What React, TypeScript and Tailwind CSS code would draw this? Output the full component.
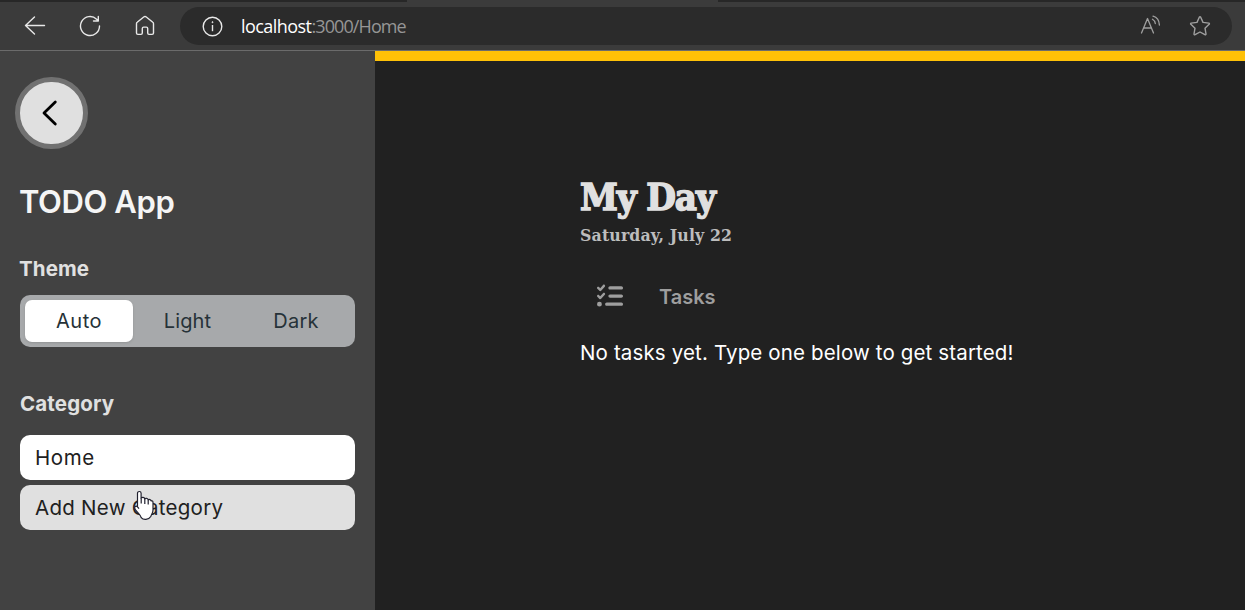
import React from "react";
import { FaListCheck } from "react-icons/fa6";

const sans = "font-['Inter','Open_Sans',sans-serif]";
const slab = "font-['DejaVu_Serif_Condensed','DejaVu_Serif',serif]";

function BrowserBar() {
  return (
    <header className="flex h-[51px] shrink-0 flex-col border-b border-[#6b6b6b] bg-[#3b3b3b]">
      <div className="flex h-[2px] shrink-0 justify-between">
        <div className="w-[407px] bg-[#272727]" />
        <div className="w-[527px] bg-[#272727]" />
      </div>
      <div className="flex flex-1 items-center pr-[13px] pl-6 text-[#e8e8e8]">
        <svg width="22" height="22" viewBox="0 0 22 22" fill="none" stroke="currentColor" strokeWidth="1.4" strokeLinecap="round" strokeLinejoin="round">
          <path d="M20.5 10.5H1.5M10.5 2L1.5 10.5L10.5 19" />
        </svg>
        <svg className="ml-[33px]" width="22" height="22" viewBox="0 0 22 22" fill="none" stroke="currentColor" strokeWidth="1.4" strokeLinecap="round" strokeLinejoin="round">
          <path d="M20.5 11A9.5 9.5 0 1 1 17.6 4.2L19.3 5.9M19.3 1.5V6H14.5" />
        </svg>
        <svg className="ml-[33px]" width="22" height="22" viewBox="0 0 22 22" fill="none" stroke="currentColor" strokeWidth="1.4" strokeLinejoin="round">
          <path d="M2.5 8.7C2.5 8.1 2.8 7.6 3.2 7.3L9.7 2C10.5 1.4 11.5 1.4 12.3 2L18.8 7.3C19.2 7.6 19.5 8.1 19.5 8.7V18C19.5 18.9 19 19.4 18.1 19.4H15C14.2 19.4 13.7 18.9 13.7 18V13.4C13.7 12.6 13.2 12.1 12.4 12.1H9.6C8.8 12.1 8.3 12.6 8.3 13.4V18C8.3 18.9 7.8 19.4 7 19.4H3.9C3 19.4 2.5 18.9 2.5 18Z" />
        </svg>
        <div className="ml-6 flex h-[38px] flex-1 items-center rounded-full bg-[#2b2b2b] pr-[21px] pl-[22px]">
          <svg width="21" height="21" viewBox="0 0 21 21" fill="none" stroke="currentColor" strokeWidth="1.4">
            <circle cx="10.5" cy="10.5" r="9.3" />
            <path d="M10.5 9V15.2" />
            <circle cx="10.5" cy="6.2" r="0.6" fill="currentColor" strokeWidth="0.7" />
          </svg>
          <div className="-mt-px ml-[18px] flex-1 font-['Open_Sans','Noto_Sans',sans-serif] text-[18px] leading-6 tracking-[-0.55px] text-white">
            localhost<span className="tracking-[-0.9px] text-[#969696]">:3000/Home</span>
          </div>
          <svg width="22" height="22" viewBox="0 0 22 22" fill="none" stroke="#a0a0a0" strokeWidth="1.3" strokeLinecap="round" strokeLinejoin="round">
            <path d="M2.5 18L8.5 3.5L14.5 18M4.7 13H12.3M13.5 4.3C15.2 5.3 16.1 6.5 16.3 8.5M14 1.2C17.8 2.2 20.2 5.5 20.4 10" />
          </svg>
          <svg className="ml-[28px]" width="22" height="22" viewBox="0 0 22 22" fill="none" stroke="#a0a0a0" strokeWidth="1.4" strokeLinejoin="round">
            <path d="M10.3 2.2Q11 1.2 11.7 2.2L14 7.4L19.8 8.1Q20.9 8.4 20.1 9.3L16 13.2L17 19Q17 20.2 15.9 19.7L11 17L6.1 19.7Q5 20.2 5 19L6 13.2L1.9 9.3Q1.1 8.4 2.2 8.1L8 7.4Z" />
          </svg>
        </div>
      </div>
    </header>
  );
}

function HandCursor() {
  return (
    <svg className="absolute top-[5px] left-[114px]" width="24" height="32" viewBox="0 0 24 32" fill="white" stroke="#20202e" strokeWidth="1.2" strokeLinejoin="round">
      <path d="M3.5 16.5V3.2C3.5 0.9 7.1 0.9 7.1 3.2V8.4C7.7 6.9 10.4 7 10.8 8.8C11.6 7.8 13.8 8.2 14.2 9.8C15 9 17 9.6 17.2 11C18.2 10.6 19 11.2 19 12.4V20C19 23.4 17.2 24.6 16.8 26.5C14.6 30.2 9.2 30.2 7.2 27.6C6.4 24.4 3.4 22.4 1.4 19.6C-0.3 17 1.7 15.2 3.5 16.8L5 18.6" />
      <path d="M7.2 8.4V13.5M10.8 9V14M14.2 10V14.5" fill="none" />
    </svg>
  );
}

function Sidebar() {
  return (
    <aside className="flex w-[375px] shrink-0 flex-col bg-[#424242] px-5 text-[20px]">
      <button className="mt-[26px] -ml-[5px] flex h-[72px] w-[73px] items-center justify-center rounded-full border-[5px] border-[#717171] bg-[#e0e0e0]">
        <svg className="-ml-[3px]" width="18" height="28" viewBox="0 0 18 28" fill="none" stroke="black" strokeWidth="2.8" strokeLinecap="round" strokeLinejoin="round">
          <path d="M14.3 3L3 14L14.3 25" />
        </svg>
      </button>
      <h1 className="mt-[29px] -ml-px h-12 text-[31px] leading-[48px] font-semibold tracking-[-0.4px] whitespace-nowrap text-[#f5f5f5]">TODO App</h1>
      <h2 className="mt-[25px] -ml-px h-[34px] text-[20.5px] leading-[35px] font-bold tracking-[0.1px] text-[#e0e0e0]">Theme</h2>
      <div className="mt-[10px] flex h-[52px] rounded-[10px] bg-[#a7a9ab] p-[5px] leading-[42px] text-[#263238]">
        <button className="h-[42px] w-[108px] rounded-[7px] bg-white tracking-[0.5px] shadow-sm">Auto</button>
        <button className="w-[109px] tracking-[0.1px]">Light</button>
        <button className="w-[108px] tracking-[0.3px]">Dark</button>
      </div>
      <h2 className="mt-[39px] h-[35px] text-[20.5px] leading-[35px] font-bold tracking-[0.15px] text-[#e0e0e0]">Category</h2>
      <div className="mt-[14px] flex flex-col gap-[5px] text-[20.5px] leading-[45px] text-[#212121]">
        <div className="h-[45px] rounded-[10px] bg-white pl-[15px] tracking-[0.6px]">Home</div>
        <div className="relative h-[45px] rounded-[10px] bg-[#e0e0e0] pl-[15px] tracking-[0.27px]">
          Add New Category
          <HandCursor />
        </div>
      </div>
    </aside>
  );
}

export default function App() {
  return (
    <div className={`flex h-[610px] w-[1245px] flex-col overflow-hidden bg-[#212121] ${sans}`}>
      <BrowserBar />
      <div className="flex flex-1">
        <Sidebar />
        <main className="flex-1 border-t-[10px] border-[#ffc107] pt-[112px] pl-[205px]">
          <h1 className={`h-[48px] text-[38px] leading-[48px] font-bold tracking-[-1.1px] text-[#e0e0e0] [-webkit-text-stroke:1.4px_#e0e0e0] ${slab}`}>My Day</h1>
          <p className={`h-[28px] text-[17.5px] leading-[28px] font-bold tracking-[0.15px] text-[#bdbdbd] ${slab}`}>Saturday, July 22</p>
          <div className="mt-[33px] flex h-[30px] items-center pl-[17px] text-[#9e9e9e]">
            <FaListCheck size={26} className="-mt-[3px]" />
            <h2 className="ml-[36px] text-[20px] leading-[30px] font-semibold">Tasks</h2>
          </div>
          <p className="mt-[26px] text-[20.5px] leading-[30px] tracking-[0.14px] whitespace-nowrap text-white">No tasks yet. Type one below to get started!</p>
        </main>
      </div>
    </div>
  );
}
